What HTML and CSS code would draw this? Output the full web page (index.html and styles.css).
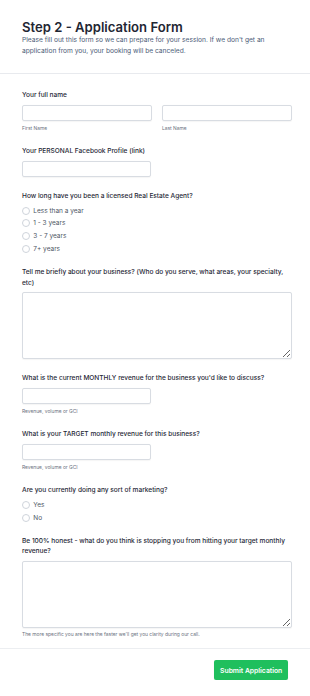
FILE: index.html
```html
<!DOCTYPE html>
<html lang="en">
<head>
<meta charset="utf-8">
<title>Step 2 - Application Form</title>
<link rel="stylesheet" href="styles.css">
</head>
<body>
<div class="page">
  <header class="head">
    <h1 class="title">Step 2 - Application Form</h1>
    <p class="intro">Please fill out this form so we can prepare for your session. If we don't get an application from you, your booking will be canceled.</p>
  </header>
  <form class="form">
    <div class="field">
      <label class="label">Your full name</label>
      <div class="row2">
        <div class="col">
          <input class="input" type="text">
          <span class="help">First Name</span>
        </div>
        <div class="col">
          <input class="input" type="text">
          <span class="help">Last Name</span>
        </div>
      </div>
    </div>
    <div class="field">
      <label class="label">Your PERSONAL Facebook Profile (link)</label>
      <input class="input half" type="text">
    </div>
    <div class="field">
      <label class="label">How long have you been a licensed Real Estate Agent?</label>
      <div class="radios">
        <label class="radio"><span class="dot"></span>Less than a year</label>
        <label class="radio"><span class="dot"></span>1 - 3 years</label>
        <label class="radio"><span class="dot"></span>3 - 7 years</label>
        <label class="radio"><span class="dot"></span>7+ years</label>
      </div>
    </div>
    <div class="field">
      <label class="label">Tell me briefly about your business? (Who do you serve, what areas, your specialty, etc)</label>
      <textarea class="area"></textarea>
    </div>
    <div class="field">
      <label class="label">What is the current MONTHLY revenue for the business you'd like to discuss?</label>
      <input class="input half" type="text">
      <span class="help">Revenue, volume or GCI</span>
    </div>
    <div class="field">
      <label class="label">What is your TARGET monthly revenue for this business?</label>
      <input class="input half" type="text">
      <span class="help">Revenue, volume or GCI</span>
    </div>
    <div class="field">
      <label class="label">Are you currently doing any sort of marketing?</label>
      <div class="radios">
        <label class="radio"><span class="dot"></span>Yes</label>
        <label class="radio"><span class="dot"></span>No</label>
      </div>
    </div>
    <div class="field">
      <label class="label">Be 100% honest - what do you think is stopping you from hitting your target monthly revenue?</label>
      <textarea class="area"></textarea>
      <span class="help help-last">The more specific you are here the faster we'll get you clarity during our call.</span>
    </div>
  </form>
  <footer class="foot">
    <button class="submit" type="button">Submit Application</button>
  </footer>
</div>
</body>
</html>
```

FILE: styles.css
```css
* { box-sizing: border-box; }
html, body { margin: 0; padding: 0; background: #ffffff; }
body {
  font-family: Inter, "Liberation Sans", Arial, sans-serif;
  color: #1f2937;
}
.page { width: 310px; }

.head {
  padding: 18.5px 18px 15.5px 22px;
  border-bottom: 1px solid #e8eaee;
}
.title {
  margin: 0;
  font-size: 13.1px;
  line-height: 16px;
  font-weight: 600;
  color: #1f2633;
}
.intro {
  margin: 0;
  font-size: 6.65px;
  line-height: 11.7px;
  color: #4d5d78;
}

.form {
  padding: 1.3px 18px 9.8px 22px;
  display: flex;
  flex-direction: column;
}
.field {
  display: flex;
  flex-direction: column;
  margin-top: 14px;
}
.label {
  font-size: 6.55px;
  line-height: 10.5px;
  font-weight: 500;
  color: #1f2937;
  margin-bottom: 4.35px;
}
.row2 {
  display: grid;
  grid-template-columns: 1fr 1fr;
  column-gap: 10px;
}
.col { display: flex; flex-direction: column; }
.input {
  display: block;
  width: 100%;
  height: 16.4px;
  border: 1px solid #d8dce2;
  border-radius: 2px;
  background: #fff;
  box-shadow: 0 0.5px 1px rgba(0,0,0,0.04);
  margin: 0;
  padding: 0 4px;
}
.half { width: 129.3px; }
.help {
  display: block;
  font-size: 4.9px;
  line-height: 7px;
  color: #6b7280;
  margin-top: 4px;
}
.help-last { margin-top: 3.3px; }
.radios {
  display: flex;
  flex-direction: column;
  margin-top: -1.75px;
  margin-bottom: -2px;
}
.radio {
  display: flex;
  align-items: center;
  gap: 3.3px;
  height: 12.7px;
  font-size: 6.5px;
  color: #4b5563;
}
.dot {
  width: 8px;
  height: 8px;
  border: 1px solid #cfd4db;
  border-radius: 50%;
  background: #fff;
  flex: none;
}
.area {
  display: block;
  width: 100%;
  height: 66.6px;
  border: 1px solid #d8dce2;
  border-radius: 2px;
  margin: 0;
  padding: 4px;
  font: inherit;
  resize: vertical;
  box-shadow: 0 0.5px 1px rgba(0,0,0,0.04);
}

.foot {
  border-top: 1px solid #eceef1;
  padding: 11.4px 21.7px 0 22px;
  display: flex;
  justify-content: flex-end;
}
.submit {
  height: 19.6px;
  width: 74.3px;
  padding: 0;
  border: none;
  border-radius: 2px;
  background: #1fbf5d;
  color: #ffffff;
  font-family: Inter, "Liberation Sans", Arial, sans-serif;
  font-size: 6.8px;
  font-weight: 600;
  box-shadow: 0 1px 1.5px rgba(0,0,0,0.08);
}
```
